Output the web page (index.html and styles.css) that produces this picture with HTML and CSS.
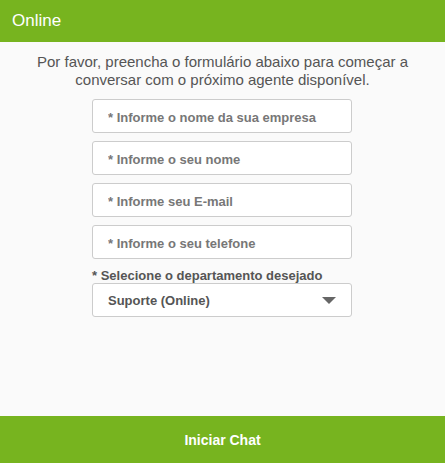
FILE: index.html
```html
<!DOCTYPE html>
<html lang="pt-BR">

<head>
    <meta charset="UTF-8">
    <meta name="viewport" content="width=device-width, initial-scale=1.0">
    <title>Chat Online</title>
    <link rel="stylesheet" href="styles.css">
</head>

<body>
    <header class="top-bar">Online</header>

    <main class="content">
        <p class="intro">Por favor, preencha o formulário abaixo para começar a conversar com o próximo agente disponível.</p>

        <form class="chat-form" id="chatForm">
            <input type="text" class="field" placeholder="* Informe o nome da sua empresa">
            <input type="text" class="field" placeholder="* Informe o seu nome">
            <input type="email" class="field" placeholder="* Informe seu E-mail">
            <input type="tel" class="field" placeholder="* Informe o seu telefone">

            <label class="dept-label" for="dept">* Selecione o departamento desejado</label>
            <div class="select-box" id="dept">
                <span class="select-value">Suporte (Online)</span>
                <span class="select-arrow"></span>
            </div>
        </form>
    </main>

    <button class="start-btn" type="submit" form="chatForm">Iniciar Chat</button>
</body>

</html>
```

FILE: styles.css
```css
* {
    margin: 0;
    padding: 0;
    box-sizing: border-box;
}

body {
    background-color: #fafafa;
    font-family: "Liberation Sans", Arial, Helvetica, sans-serif;
    display: flex;
    flex-direction: column;
    height: 100vh;
}

.top-bar {
    background-color: #77b41f;
    color: #fff;
    font-size: 17px;
    height: 42px;
    line-height: 42px;
    padding-left: 12px;
}

.content {
    flex: 1;
    display: flex;
    flex-direction: column;
    align-items: center;
}

.intro {
    color: #555;
    font-size: 15px;
    line-height: 18px;
    text-align: center;
    padding-top: 11px;
    width: 420px;
}

.chat-form {
    width: 260px;
    margin-top: 10px;
    margin-right: 1px;
    display: flex;
    flex-direction: column;
    gap: 8px;
}

.field {
    height: 34px;
    border: 1px solid #ccc;
    border-radius: 3px;
    background-color: #fff;
    padding: 3px 15px 0;
    font-family: inherit;
    font-size: 13px;
    font-weight: bold;
    color: #555;
}

.field::placeholder {
    color: #777;
    opacity: 1;
}

.dept-label {
    color: #555;
    font-size: 13px;
    font-weight: bold;
    line-height: 15px;
    margin-top: 1px;
    margin-bottom: -8px;
}

.select-box {
    height: 34px;
    border: 1px solid #ccc;
    border-radius: 3px;
    background-color: #fff;
    padding: 0 15px;
    display: flex;
    align-items: center;
    justify-content: space-between;
}

.select-value {
    color: #555;
    font-size: 13px;
    font-weight: bold;
}

.select-arrow {
    width: 0;
    height: 0;
    border-left: 7px solid transparent;
    border-right: 7px solid transparent;
    border-top: 7px solid #666;
}

.start-btn {
    height: 47px;
    border: none;
    background-color: #77b41f;
    color: #fff;
    font-family: inherit;
    font-size: 14px;
    font-weight: bold;
}
```
